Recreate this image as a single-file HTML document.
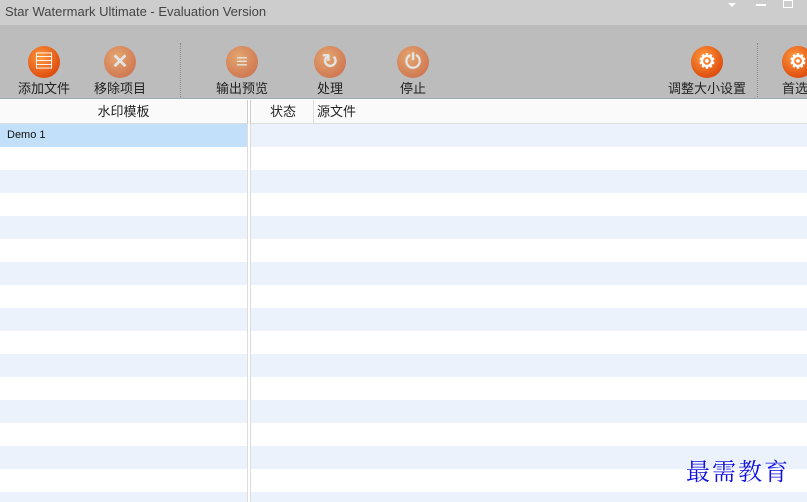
<!DOCTYPE html><html><head><meta charset="utf-8"><style>
*{margin:0;padding:0;box-sizing:border-box}
html,body{width:807px;height:502px;overflow:hidden}
body{background:#fff;font-family:"Liberation Sans","Noto Sans CJK SC",sans-serif;position:relative}
.title{position:absolute;left:0;top:0;width:807px;height:25px;background:#cdcdcd;color:#444;font-size:13px;line-height:24px;padding-left:5px}
.tb{position:absolute;left:0;top:25px;width:807px;height:74px;background:#bcbcbc;border-bottom:1px solid #9aa8b8;overflow:hidden}
.btn{position:absolute;top:21px;text-align:center;font-size:13px;color:#222;width:80px}
.ic{width:32px;height:32px;border-radius:50%;margin:0 auto 3px;background:radial-gradient(circle at 40% 35%,#ff9a40,#e05010 70%,#c84008);position:relative;color:#fff;font-weight:bold;font-size:20px;line-height:32px;text-align:center}
.ic.f{opacity:.6}
.btn span{display:block;line-height:16px;white-space:nowrap}
.sep{position:absolute;top:18px;width:0;height:54px;border-left:1px dotted #888}
.hdr{position:absolute;top:100px;height:24px;background:#fafafa;border-bottom:1px solid #ddd;font-size:13px;color:#222;line-height:24px}
.rows{position:absolute;top:124px;height:378px;overflow:hidden}
.r{height:23px}
.r:nth-child(odd){background:#ecf2fc}
.r:nth-child(even){background:#fff}
.wm{position:absolute;left:686px;top:452px;font-family:"Noto Serif CJK SC",serif;font-size:24px;color:#1010e0;letter-spacing:2px;text-shadow:0 0 2px #fff}
</style></head><body>
<div class="title">Star Watermark Ultimate - Evaluation Version</div>
<div style="position:absolute;left:728px;top:3px;border-left:4px solid transparent;border-right:4px solid transparent;border-top:4px solid #fff"></div>
<div style="position:absolute;left:756px;top:4px;width:10px;height:2px;background:#fff"></div>
<div style="position:absolute;left:783px;top:0;width:10px;height:8px;border:1px solid #fff"></div>
<div class="tb">
<div class="btn" style="left:4px"><div class="ic">▤</div><span>添加文件</span></div>
<div class="btn" style="left:80px"><div class="ic f">✕</div><span>移除项目</span></div>
<div class="sep" style="left:180px"></div>
<div class="btn" style="left:202px"><div class="ic f">≡</div><span>输出预览</span></div>
<div class="btn" style="left:290px"><div class="ic f">↻</div><span>处理</span></div>
<div class="btn" style="left:373px"><div class="ic f">⏻</div><span>停止</span></div>
<div class="btn" style="left:660px;width:94px"><div class="ic">⚙</div><span>调整大小设置</span></div>
<div class="sep" style="left:757px"></div>
<div class="btn" style="left:776px;width:31px;text-align:left;overflow:hidden"><div class="ic" style="margin:0 0 3px 6px">⚙</div><span style="padding-left:6px">首选</span></div>
</div>
<div class="hdr" style="left:0;width:248px;text-align:center;border-right:1px solid #ccc">水印模板</div>
<div class="hdr" style="left:250px;width:557px;border-left:1px solid #ccc"><span style="position:absolute;left:19px">状态</span><span style="position:absolute;left:62px;top:0;height:24px;border-left:1px solid #ddd;padding-left:3px">源文件</span></div>
<div class="rows" style="left:0;width:248px;border-right:1px solid #ddd">
<div class="r" style="background:#c2e0fa;font-size:11px;line-height:23px;padding-left:7px;color:#111">Demo 1</div>
<div class="r"></div><div class="r"></div><div class="r"></div><div class="r"></div><div class="r"></div><div class="r"></div><div class="r"></div><div class="r"></div><div class="r"></div><div class="r"></div><div class="r"></div><div class="r"></div><div class="r"></div><div class="r"></div><div class="r"></div><div class="r"></div>
</div>
<div class="rows" style="left:250px;width:557px;border-left:1px solid #ddd">
<div class="r"></div><div class="r"></div><div class="r"></div><div class="r"></div><div class="r"></div><div class="r"></div><div class="r"></div><div class="r"></div><div class="r"></div><div class="r"></div><div class="r"></div><div class="r"></div><div class="r"></div><div class="r"></div><div class="r"></div><div class="r"></div><div class="r"></div>
</div>
<div class="wm">最需教育</div>
</body></html>
